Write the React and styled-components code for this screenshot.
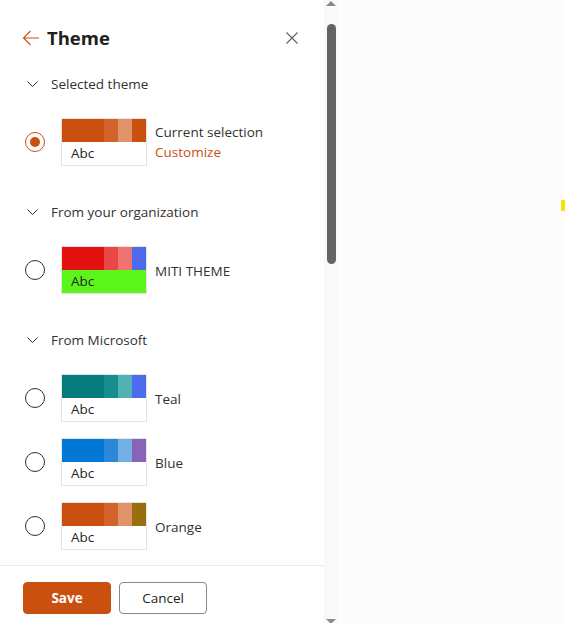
import React, { useState } from 'react';
import styled, { createGlobalStyle } from 'styled-components';

const GlobalStyle = createGlobalStyle`
  html, body {
    margin: 0;
    padding: 0;
    background: #fcfcfc;
    font-family: "Open Sans", "Noto Sans", sans-serif;
    color: #323130;
  }
  * { box-sizing: border-box; }
`;

const Page = styled.div`
  display: flex;
  height: 100vh;
  overflow: hidden;
`;

const Panel = styled.div`
  width: 324px;
  background: #ffffff;
  display: flex;
  flex-direction: column;
`;

const Body = styled.div`
  flex: 1;
  overflow: hidden;
`;

const Header = styled.div`
  display: flex;
  align-items: center;
  height: 62px;
  padding: 14px 26px 0 22px;
`;

const BackButton = styled.button`
  display: flex;
  align-items: center;
  border: none;
  background: none;
  padding: 0;
  margin-right: 7px;
  cursor: pointer;
`;

const Title = styled.h1`
  flex: 1;
  margin: 0;
  font-size: 18.5px;
  font-weight: 700;
  color: #201f1e;
  line-height: 28px;
`;

const CloseButton = styled.button`
  display: flex;
  border: none;
  background: none;
  padding: 0;
  cursor: pointer;
`;

const Section = styled.section`
  margin-bottom: 16px;
`;

const SectionHeader = styled.div`
  display: flex;
  align-items: center;
  gap: 13px;
  height: 44px;
  padding-left: 27px;
  margin-bottom: 4px;
  font-size: 13.5px;
  color: #323130;
`;

const Row = styled.label`
  display: flex;
  align-items: center;
  height: 64px;
  padding-left: 25px;
  cursor: pointer;
`;

const Radio = styled.span`
  width: 20px;
  height: 20px;
  border-radius: 50%;
  border: 1px solid ${p => (p.$checked ? '#ca5010' : '#323130')};
  display: flex;
  align-items: center;
  justify-content: center;
  margin-right: 16px;
  flex-shrink: 0;

  &::after {
    content: '';
    width: 10px;
    height: 10px;
    border-radius: 50%;
    background: ${p => (p.$checked ? '#ca5010' : 'transparent')};
  }
`;

const Swatch = styled.div`
  width: 86px;
  height: 48px;
  border: 1px solid #e6e4e2;
  display: flex;
  flex-direction: column;
  flex-shrink: 0;
  margin-right: 8px;
`;

const Strip = styled.div`
  display: flex;
  height: 23px;
`;

const Chip = styled.div`
  background: ${p => p.$color};
  width: ${p => p.$w}px;
`;

const Sample = styled.div`
  flex: 1;
  background: ${p => p.$bg || '#ffffff'};
  font-size: 13.5px;
  color: #201f1e;
  padding-left: 9px;
  line-height: 23px;
`;

const Labels = styled.div`
  display: flex;
  flex-direction: column;
  font-size: 13.5px;
  line-height: 20px;
  color: #323130;
  padding-top: ${p => (p.$single ? '2px' : '0')};
`;

const LinkText = styled.span`
  color: #ca5010;
`;

const Footer = styled.div`
  display: flex;
  gap: 8px;
  border-top: 1px solid #edebe9;
  padding: 16px 23px 9px;
`;

const Button = styled.button`
  width: 88px;
  height: 32px;
  border-radius: 4px;
  font-family: inherit;
  font-size: 13.5px;
  font-weight: ${p => (p.$primary ? 700 : 500)};
  cursor: pointer;
  background: ${p => (p.$primary ? '#ca5010' : '#ffffff')};
  color: ${p => (p.$primary ? '#ffffff' : '#201f1e')};
  border: 1px solid ${p => (p.$primary ? '#ca5010' : '#8a8886')};
`;

const ScrollTrack = styled.div`
  width: 14px;
  background: #f9f9f9;
  display: flex;
  flex-direction: column;
  align-items: center;
`;

const Arrow = styled.div`
  width: 0;
  height: 0;
  border-left: 5px solid transparent;
  border-right: 5px solid transparent;
  ${p => (p.$down ? 'border-top: 5px solid #8a8a8a;' : 'border-bottom: 5px solid #8a8a8a;')}
  margin-top: ${p => (p.$down ? 'auto' : '1px')};
  margin-bottom: ${p => (p.$down ? '-1px' : '0')};
`;

const Thumb = styled.div`
  width: 9px;
  height: 240px;
  margin-top: 18px;
  border-radius: 5px;
  background: #646464;
`;

const Rest = styled.div`
  flex: 1;
  display: flex;
  justify-content: flex-end;
  padding-top: 200px;
`;

const Marker = styled.div`
  width: 4px;
  height: 11px;
  background: #f2e600;
`;

const Chevron = () => (
  <svg width="11" height="6" viewBox="0 0 11 6">
    <path d="M0.5 0.5 L5.5 5.5 L10.5 0.5" fill="none" stroke="#323130" strokeWidth="1" />
  </svg>
);

const themes = {
  current: { chips: ['#ca5010', '#d3622b', '#e0926b', '#ca5010'] },
  miti: { chips: ['#e3120e', '#ea4646', '#f07373', '#4f6bed'], sample: '#5cf51b' },
  teal: { chips: ['#037c7b', '#178c8c', '#4fb3b3', '#4f6bed'] },
  blue: { chips: ['#0078d4', '#2b88d8', '#71afe5', '#8764b8'] },
  orange: { chips: ['#ca5010', '#d3622b', '#e0926b', '#986f0b'] },
};

const ThemeSwatch = ({ theme }) => (
  <Swatch>
    <Strip>
      {theme.chips.map((c, i) => (
        <Chip key={i} $color={c} $w={i === 0 ? 42 : 14} />
      ))}
    </Strip>
    <Sample $bg={theme.sample}>Abc</Sample>
  </Swatch>
);

const ThemeRow = ({ id, selected, onSelect, single = true, children }) => (
  <Row onClick={() => onSelect(id)}>
    <Radio $checked={selected === id} />
    <ThemeSwatch theme={themes[id]} />
    <Labels $single={single}>{children}</Labels>
  </Row>
);

export default function App() {
  const [selected, setSelected] = useState('current');

  return (
    <Page>
      <GlobalStyle />
      <Panel>
        <Body>
          <Header>
            <BackButton aria-label="Back">
              <svg width="18" height="16" viewBox="0 0 18 16">
                <path d="M17 8 H1.5 M8.5 1 L1.5 8 L8.5 15" fill="none" stroke="#ca5010" strokeWidth="1.1" />
              </svg>
            </BackButton>
            <Title>Theme</Title>
            <CloseButton aria-label="Close">
              <svg width="12" height="12" viewBox="0 0 12 12">
                <path d="M0.5 0.5 L11.5 11.5 M11.5 0.5 L0.5 11.5" fill="none" stroke="#605e5c" strokeWidth="1.1" />
              </svg>
            </CloseButton>
          </Header>

          <Section>
            <SectionHeader><Chevron />Selected theme</SectionHeader>
            <ThemeRow id="current" selected={selected} onSelect={setSelected} single={false}>
              <span>Current selection</span>
              <LinkText>Customize</LinkText>
            </ThemeRow>
          </Section>

          <Section>
            <SectionHeader><Chevron />From your organization</SectionHeader>
            <ThemeRow id="miti" selected={selected} onSelect={setSelected}>
              <span>MITI THEME</span>
            </ThemeRow>
          </Section>

          <Section>
            <SectionHeader><Chevron />From Microsoft</SectionHeader>
            <ThemeRow id="teal" selected={selected} onSelect={setSelected}>
              <span>Teal</span>
            </ThemeRow>
            <ThemeRow id="blue" selected={selected} onSelect={setSelected}>
              <span>Blue</span>
            </ThemeRow>
            <ThemeRow id="orange" selected={selected} onSelect={setSelected}>
              <span>Orange</span>
            </ThemeRow>
          </Section>
        </Body>
        <Footer>
          <Button $primary>Save</Button>
          <Button>Cancel</Button>
        </Footer>
      </Panel>
      <ScrollTrack>
        <Arrow />
        <Thumb />
        <Arrow $down />
      </ScrollTrack>
      <Rest>
        <Marker />
      </Rest>
    </Page>
  );
}
